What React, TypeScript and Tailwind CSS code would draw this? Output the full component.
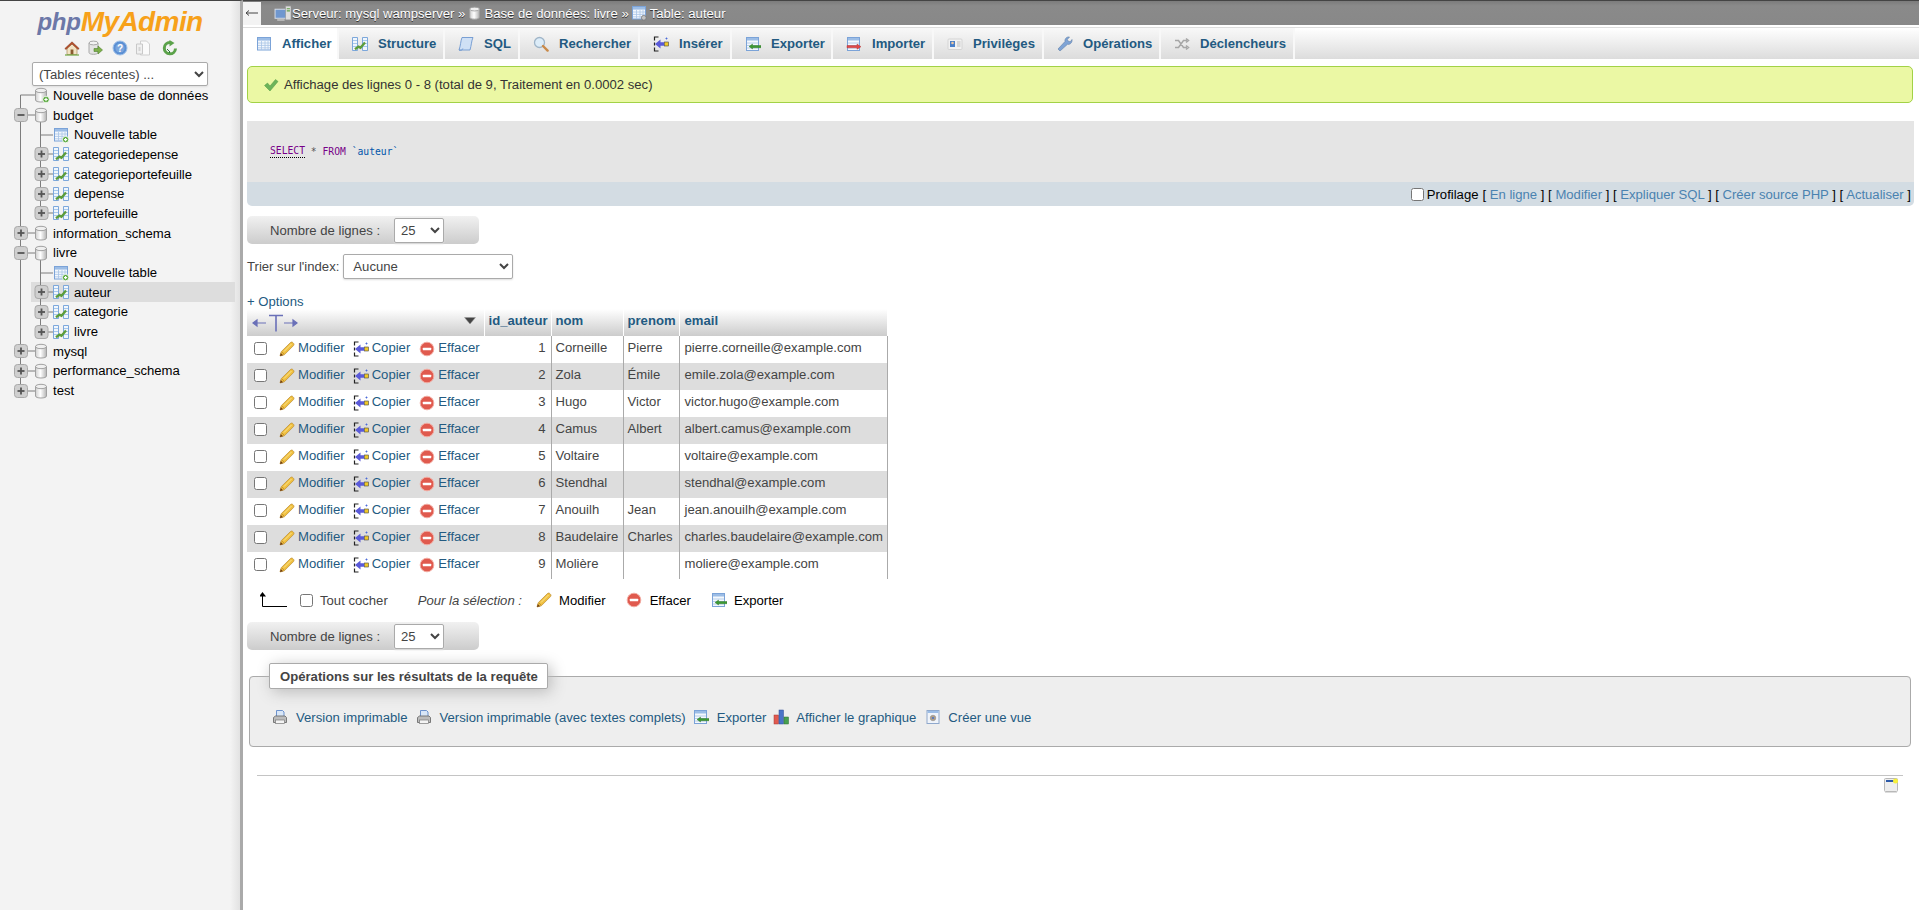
import React from "react";

const I = ({ s = 16, children, className = "" }: { s?: number; children: React.ReactNode; className?: string }) => (
  <svg width={s} height={s} viewBox="0 0 16 16" className={"shrink-0 " + className}>{children}</svg>
);

const Db = ({ plus = false, s = 16 }: { plus?: boolean; s?: number }) => (
  <I s={s}>
    <defs>
      <linearGradient id="dbg" x1="0" x2="1" y1="0" y2="0">
        <stop offset="0" stopColor="#cfcfcf" />
        <stop offset=".45" stopColor="#ffffff" />
        <stop offset="1" stopColor="#b4b4b4" />
      </linearGradient>
    </defs>
    <path d="M2 3.500v9.500c0 1.300 2.500 2 5.500 2s5.500-.7 5.500-2V3.500z" fill="url(#dbg)" stroke="#a0a0a0" />
    <ellipse cx="7.500" cy="3.500" rx="5.500" ry="2.200" fill="#efefef" stroke="#a0a0a0" />
    {plus && (
      <>
        <circle cx="12.500" cy="12.500" r="3.300" fill="#58a83c" stroke="#fff" strokeWidth=".8" />
        <path d="M10.800 12.500h3.400M12.500 10.800v3.400" stroke="#fff" strokeWidth="1.200" />
      </>
    )}
  </I>
);

const TableIc = ({ plus = false, gear = false }: { plus?: boolean; gear?: boolean }) => (
  <I>
    <rect x="1.500" y="1.500" width="13" height="12.500" fill="#f4f8fd" stroke="#7ba3d8" />
    <rect x="2" y="2" width="12" height="2.600" fill="#9cbde6" />
    <path d="M2 7h12M2 9.400h12M2 11.800h12M5.500 5v9M9 5v9M12 5v9" stroke="#a8c4e6" strokeWidth=".8" />
    {plus && (
      <>
        <circle cx="12.600" cy="12.600" r="3.200" fill="#58a83c" stroke="#fff" strokeWidth=".8" />
        <path d="M11 12.600h3.200M12.600 11v3.200" stroke="#fff" strokeWidth="1.100" />
      </>
    )}
    {gear && <circle cx="12.800" cy="12.800" r="2.400" fill="#c2c2c2" stroke="#777" strokeWidth=".8" />}
  </I>
);

const Props = () => (
  <I>
    <path d="M.5 1.500h5v13h-5zM10.500 1.500h5v13h-5z" fill="#f0f6fc" stroke="#6f9fd8" strokeWidth=".9" />
    <path d="M1 4.500h4M1 7.500h4M1 10.500h4M11 4.500h4M11 7.500h4M11 10.500h4" stroke="#a8c8ec" />
    <path d="M3 13.200l3.500-2.600 2 1.200L13 6.500" fill="none" stroke="#5c9c3a" strokeWidth="2.400" />
  </I>
);

const Expander = ({ minus = false }: { minus?: boolean }) => (
  <g>
    <rect x=".5" y=".5" width="13" height="13" rx="3" fill="#cfcfcf" stroke="#a9a9a9" />
    <path d="M3.500 7h7" stroke="#555" strokeWidth="1.800" />
    {!minus && <path d="M7 3.500v7" stroke="#555" strokeWidth="1.800" />}
  </g>
);

type Row = {
  t: string;
  lvl: number;
  kind: "newdb" | "db" | "newtable" | "table";
  minus?: boolean;
  down?: boolean;
  active?: boolean;
  last?: boolean;
};

const rows: Row[] = [
  { t: "Nouvelle base de données", lvl: 1, kind: "newdb" },
  { t: "budget", lvl: 1, kind: "db", minus: true, down: true },
  { t: "Nouvelle table", lvl: 2, kind: "newtable" },
  { t: "categoriedepense", lvl: 2, kind: "table" },
  { t: "categorieportefeuille", lvl: 2, kind: "table" },
  { t: "depense", lvl: 2, kind: "table" },
  { t: "portefeuille", lvl: 2, kind: "table", last: true },
  { t: "information_schema", lvl: 1, kind: "db" },
  { t: "livre", lvl: 1, kind: "db", minus: true, down: true },
  { t: "Nouvelle table", lvl: 2, kind: "newtable" },
  { t: "auteur", lvl: 2, kind: "table", active: true },
  { t: "categorie", lvl: 2, kind: "table" },
  { t: "livre", lvl: 2, kind: "table", last: true },
  { t: "mysql", lvl: 1, kind: "db" },
  { t: "performance_schema", lvl: 1, kind: "db" },
  { t: "test", lvl: 1, kind: "db" },
];

const TreeRow = ({ r, i }: { r: Row; i: number }) => {
  const first = i === 0;
  const lastAll = i === rows.length - 1;
  const lineColor = "#7d7d7d";
  return (
    <div className="relative flex h-[19.7px] items-center">
      {r.active && <div className="absolute left-[31px] right-[5px] top-0 bottom-0 bg-[#dddddd]" />}
      <svg width="53" height="20" viewBox="0 0 53 20" className="relative shrink-0">
        <path d={`M20.500 ${first ? 10 : 0}V${lastAll ? 10 : 20}`} stroke={lineColor} fill="none" />
        {r.lvl === 1 && <path d="M20.500 10H35" stroke={lineColor} />}
        {r.lvl === 1 && r.down && <path d="M40.500 16V20" stroke={lineColor} />}
        {r.lvl === 2 && (
          <path d={`M40.500 0V${r.last ? 10 : 20}M40.500 10H53`} stroke={lineColor} fill="none" />
        )}
        {r.kind === "db" && (
          <g transform="translate(14 3)">
            <Expander minus={r.minus} />
          </g>
        )}
        {r.kind === "table" && (
          <g transform="translate(34.500 3)">
            <Expander />
          </g>
        )}
        {r.lvl === 1 && (
          <g transform="translate(33.500 2)">
            <Db plus={r.kind === "newdb"} />
          </g>
        )}
      </svg>
      {r.lvl === 2 && (
        <span className="relative mr-[5px]">
          {r.kind === "newtable" ? <TableIc plus /> : <Props />}
        </span>
      )}
      <span className="relative whitespace-nowrap text-black">{r.t}</span>
    </div>
  );
};

const Home = () => (
  <I>
    <path d="M3 8v6.500h10V8L8 3.500z" fill="#f1e3c4" stroke="#a98a5a" strokeWidth=".7" />
    <path d="M.8 8.600L8 1.800l7.200 6.800-1.200.9L8 4 2 9.500z" fill="#b9502c" stroke="#7d3a1f" strokeWidth=".5" />
    <rect x="6.600" y="9.500" width="2.800" height="5" fill="#8a5a2e" />
    <path d="M1 15h14" stroke="#6ea53e" strokeWidth="1.200" />
  </I>
);
const DbGo = () => (
  <I>
    <path d="M2 3v9.500c0 1.200 2.200 1.800 4.500 1.800S11 13.700 11 12.500V3z" fill="#e4e4e4" stroke="#a8a8a8" />
    <ellipse cx="6.500" cy="3" rx="4.500" ry="1.900" fill="#f2f2f2" stroke="#a8a8a8" />
    <path d="M7 8.500h4V6l4.500 4-4.500 4v-2.500H7z" fill="#7eb04a" stroke="#4f7f2d" strokeWidth=".6" />
  </I>
);
const Help = () => (
  <I>
    <circle cx="8" cy="8" r="7" fill="#5a8fd4" stroke="#9fc0e8" />
    <circle cx="8" cy="8" r="4.600" fill="#fff" opacity=".2" />
    <text x="8" y="11.600" textAnchor="middle" fontSize="10" fontWeight="700" fontFamily="Liberation Sans" fill="#fff">?</text>
  </I>
);
const Docs = () => (
  <I>
    <path d="M5.500 1h6l3 3v11h-9z" fill="#fafafa" stroke="#cfcfcf" />
    <path d="M1.500 4h6v10h-6z" fill="#f0f0f0" stroke="#c8c8c8" />
    <path d="M3.500 7h2v4h-2z" fill="#d4d4d4" />
  </I>
);
const Reload = () => (
  <I>
    <path d="M13.500 8.500A5.600 5.600 0 1 1 8 2.600" fill="none" stroke="#5ba24a" strokeWidth="3" />
    <path d="M7.500 0l5 3-5 3.500z" fill="#5ba24a" />
    <path d="M5 9l3 3-1 1" fill="none" stroke="#2d7a38" strokeWidth="1" />
  </I>
);
const Sql = () => (
  <I>
    <path d="M4 1.500h11c-1.500 3-1.600 8-3 12.500H1C2.600 10 2.600 5 4 1.500z" fill="#cfe0f5" stroke="#6d96cf" strokeWidth=".9" />
    <path d="M1 14c1.800 1 3.500 0 3.800-1.500" fill="none" stroke="#6d96cf" strokeWidth=".9" />
  </I>
);
const Search = () => (
  <I>
    <circle cx="6.500" cy="6.500" r="5" fill="#dcecf8" stroke="#9fb5c8" strokeWidth="1.300" />
    <path d="M10 10l4.600 4.600" stroke="#c98a4a" strokeWidth="2.400" strokeLinecap="round" />
  </I>
);
const Insert = () => (
  <I>
    <path d="M5.500 1H1.500v3.500M1.500 11.500V15h4M1.500 6.500v3" stroke="#222" strokeWidth="1.200" fill="none" />
    <path d="M2 8l5.500-4.500v2.700h3.500v3.600H7.500v2.700z" fill="#5a5ad8" />
    <rect x="11.500" y="6" width="4" height="4" fill="#f0c828" stroke="#444" strokeWidth=".6" />
    <path d="M12.500 2.500h2M13.500 1.500v2" stroke="#4a6ad8" strokeWidth=".9" />
  </I>
);
const ExportIc = () => (
  <I>
    <rect x="1.500" y="1.500" width="12" height="13" fill="#f4f8fd" stroke="#7ba3d8" />
    <rect x="2" y="2" width="11" height="2.500" fill="#9cbde6" />
    <path d="M2 7h11M2 9.500h11M2 12h11" stroke="#a8c4e6" strokeWidth=".8" />
    <path d="M4 10.500L7.500 8v1.500H16v2.200H7.500V13z" fill="#3c9a32" stroke="#2a6f24" strokeWidth=".4" />
  </I>
);
const ImportIc = () => (
  <I>
    <rect x="1.500" y="1.500" width="12" height="13" fill="#f4f8fd" stroke="#7ba3d8" />
    <rect x="2" y="2" width="11" height="2.500" fill="#9cbde6" />
    <path d="M2 7h11M2 9.500h11M2 12h11" stroke="#a8c4e6" strokeWidth=".8" />
    <path d="M1 9.500h10V8l4 2.700-4 2.600v-1.500H1z" fill="#e04848" stroke="#a82c2c" strokeWidth=".4" />
  </I>
);
const Priv = () => (
  <I>
    <rect x="1" y="3" width="14" height="10.500" rx="1" fill="#f2f2f2" stroke="#d4d4d4" />
    <rect x="3" y="5" width="5" height="6" fill="#4a7fc8" />
    <circle cx="5.500" cy="7" r="1.300" fill="#f0c8a0" />
    <path d="M10 6h3.500M10 8h3.500M10 10h3.500" stroke="#bbb" />
  </I>
);
const Wrench = () => (
  <I>
    <path d="M3 15L1 13l7-7.500C7.500 3 9.500.5 12.500 1L10.300 3.500l1 1.800 2 .5L15 3.500c.5 3-2 5.500-4.500 4.800z" fill="#7fa4d6" stroke="#5f7fa8" strokeWidth=".6" />
  </I>
);
const Trig = () => (
  <I>
    <path d="M1 4.500h3.500l5 7H13M1 11.500h3.500l5-7H13M12 2.500l2.500 2-2.500 2M12 9.500l2.500 2-2.500 2" fill="none" stroke="#a6a6a6" strokeWidth="1.500" />
  </I>
);
const Check = () => (
  <I>
    <path d="M1.500 8.500L4.500 6l2.500 3L12.500 2.500 15 4.500 7 14z" fill="#6cb45a" stroke="#4f9a40" strokeWidth=".5" />
  </I>
);
const Pencil = () => (
  <I>
    <path d="M1 15l1.200-4.300L11.500 1.500c1-.8 2-.4 2.700.4.800.8 1.100 1.800.3 2.700L5.300 13.800z" fill="#f0c040" stroke="#b98a30" strokeWidth=".7" />
    <path d="M3 11l2 2" stroke="#c99530" />
    <path d="M1 15l.8-3 2.200 2.200z" fill="#6e3d14" />
    <path d="M5 10.500l7.500-7.500" stroke="#fbe490" />
  </I>
);
const Del = () => (
  <I>
    <circle cx="8" cy="8" r="6.800" fill="#e05a4e" stroke="#f2aaa0" />
    <rect x="3.800" y="6.800" width="8.400" height="2.400" rx=".5" fill="#fff" />
  </I>
);
const Print = () => (
  <I>
    <path d="M4.500 1.500h6l1.500 1.500v5H4.500z" fill="#d8e6f7" stroke="#5f88c8" strokeWidth=".9" />
    <path d="M1.500 8.500l2-1.500h9.500l1.500 1.500v5h-13z" fill="#bcbcbc" stroke="#6e6e6e" strokeWidth=".9" />
    <rect x="3.500" y="11" width="9" height="3.500" fill="#f4f4f4" stroke="#7a7a7a" strokeWidth=".7" />
  </I>
);
const Chart = () => (
  <I>
    <rect x="1" y="6" width="4.500" height="9" fill="#e05a50" stroke="#a83830" strokeWidth=".5" />
    <rect x="6" y="1" width="4.500" height="14" fill="#4a74c8" stroke="#2c4c98" strokeWidth=".5" />
    <rect x="11" y="8" width="4.500" height="7" fill="#48a050" stroke="#2c7034" strokeWidth=".5" />
  </I>
);
const View = () => (
  <I>
    <rect x="2" y="1.500" width="12" height="13" fill="#f0f4fa" stroke="#8fa8cc" />
    <rect x="2.500" y="2" width="11" height="2" fill="#9cbde6" />
    <circle cx="8" cy="9" r="2.800" fill="#b0a08a" stroke="#8a8a8a" strokeWidth=".5" />
    <circle cx="8" cy="9" r="1.100" fill="#4a74c8" />
  </I>
);
const ServerIc = () => (
  <I s={17}>
    <rect x="1" y="4" width="11" height="8.500" fill="#6f97cf" stroke="#d0d8e4" />
    <rect x="3" y="13" width="7" height="2" fill="#b8b8b8" />
    <rect x="11" y="1" width="5" height="13" fill="#dedede" stroke="#9a9a9a" strokeWidth=".6" />
    <path d="M12 3.500h3M12 5.500h3" stroke="#5fa048" />
  </I>
);

const tabs: { t: string; w: number; ic: React.ReactNode; active?: boolean }[] = [
  { t: "Afficher", w: 96, ic: <TableIc />, active: true },
  { t: "Structure", w: 106, ic: <Props /> },
  { t: "SQL", w: 75, ic: <Sql /> },
  { t: "Rechercher", w: 120, ic: <Search /> },
  { t: "Insérer", w: 92, ic: <Insert /> },
  { t: "Exporter", w: 101, ic: <ExportIc /> },
  { t: "Importer", w: 101, ic: <ImportIc /> },
  { t: "Privilèges", w: 110, ic: <Priv /> },
  { t: "Opérations", w: 117, ic: <Wrench /> },
  { t: "Déclencheurs", w: 134, ic: <Trig /> },
];

const data = [
  [1, "Corneille", "Pierre", "pierre.corneille@example.com"],
  [2, "Zola", "Émile", "emile.zola@example.com"],
  [3, "Hugo", "Victor", "victor.hugo@example.com"],
  [4, "Camus", "Albert", "albert.camus@example.com"],
  [5, "Voltaire", "", "voltaire@example.com"],
  [6, "Stendhal", "", "stendhal@example.com"],
  [7, "Anouilh", "Jean", "jean.anouilh@example.com"],
  [8, "Baudelaire", "Charles", "charles.baudelaire@example.com"],
  [9, "Molière", "", "moliere@example.com"],
];

const Nav = ({ className = "" }: { className?: string }) => (
  <div className={"flex h-[28px] w-[232px] items-center rounded-[5px] bg-[linear-gradient(#f1f1f1,#cccccc)] pl-[23px] " + className}>
    <span className="w-[124px]">Nombre de lignes :</span>
    <select className="h-[25px] w-[50px] rounded-[2px] border border-[#aaaaaa] bg-white pl-[2px] text-[#444] shadow-[0_1px_2px_#ddd]" defaultValue="25">
      <option>25</option>
    </select>
  </div>
);

const A = ({ children }: { children: React.ReactNode }) => <span className="text-[#235a81]">{children}</span>;
const L = ({ children }: { children: React.ReactNode }) => <span className="text-[#4a82b0]">{children}</span>;

export default function App() {
  return (
    <div className="flex min-h-screen w-full overflow-hidden bg-white font-['Liberation_Sans',Arial,sans-serif] text-[13.12px] leading-[15px] text-[#444]">
      <aside className="w-[243px] shrink-0 border-r-[3px] border-t border-[#aaaaaa] border-t-[#444] bg-[linear-gradient(to_right,#f3f3f3_96%,#e2e2e2)]">
        <div className="flex h-[36px] items-center justify-center pt-[5px] font-bold text-[#6c78a8] italic">
          <span className="text-[24px] leading-[30px] tracking-[-0.2px]">php</span>
          <span className="text-[28px] leading-[30px] tracking-[-0.6px] text-[#f7a11a]">MyAdmin</span>
        </div>
        <div className="flex h-[24px] items-center pb-[2px] pl-[64px]">
          <Home />
          <span className="ml-[7px]"><DbGo /></span>
          <span className="ml-[9px]"><Help /></span>
          <span className="ml-[7px]"><Docs /></span>
          <span className="ml-[11px]"><Reload /></span>
        </div>
        <div className="pl-[32px] pt-[1px]">
          <select className="h-[24px] w-[176px] rounded-[2px] border border-[#aaaaaa] bg-white pl-[2px] text-[#444] shadow-[0_1px_2px_#ddd]">
            <option>(Tables récentes) ...</option>
          </select>
        </div>
        <div className="-mt-[0.5px]">
          {rows.map((r, i) => <TreeRow key={i} r={r} i={i} />)}
        </div>
      </aside>

      <main className="min-w-0 flex-1">
        <div className="flex h-[25px] items-center border-t border-[#444] bg-[linear-gradient(#7c7c7c,#8a8a8a_20%,#888888)] text-white [text-shadow:0_1px_0_#333]">
          <span className="flex h-[23px] w-[18px] items-center justify-center bg-[#f3f3f3]">
            <svg width="14" height="8" viewBox="0 0 14 8"><path d="M1 4h12M1 4l3-2.500M1 4l3 2.500" stroke="#444" fill="none" /></svg>
          </span>
          <span className="ml-[13px] flex items-center"><ServerIc /><span className="ml-[1px]">Serveur: mysql wampserver »</span></span>
          <span className="ml-[3px] flex items-center"><Db s={14} /><span className="ml-[2px]">Base de données: livre »</span></span>
          <span className="ml-[2px] flex items-center"><TableIc gear /><span className="ml-[3px]">Table: auteur</span></span>
        </div>
        <div className="mt-[2px] flex h-[32px] border-t border-[#dddddd] bg-[linear-gradient(#ffffff,#dcdcdc)]">
          {tabs.map((t) => (
            <div
              key={t.t}
              style={{ width: t.w }}
              className={"flex shrink-0 items-center border-r-2 border-[#f8f8f8] pl-[13px] font-bold text-[#235a81] " + (t.active ? "bg-white" : "bg-[linear-gradient(#f8f8f8,#dcdcdc)]")}
            >
              {t.ic}
              <span className="ml-[10px]">{t.t}</span>
            </div>
          ))}
        </div>

        <div className="pl-[4px] pr-[5px]">
          <div className="mr-[1px] mt-[7px] flex h-[37px] items-center rounded-[5px] border border-[#a2d246] bg-[#ebf8a4] pl-[15px]">
            <Check />
            <span className="ml-[5px] text-[#333]">Affichage des lignes 0 - 8 (total de 9, Traitement en 0.0002 sec)</span>
          </div>

          <div className="mt-[18px] rounded-b-[5px] bg-[#d3dce3]">
            <div className="flex h-[61px] items-center bg-[#e5e5e5] pl-[23px] font-['DejaVu_Sans_Mono',monospace] text-[9.7px]">
              <span className="border-b border-dotted border-black leading-[12px] text-[#770088]">SELECT</span>
              <span className="text-[#555]">&nbsp;*&nbsp;</span>
              <span className="text-[#770088]">FROM</span>
              <span className="text-[#0055aa]">&nbsp;`auteur`</span>
            </div>
            <div className="flex h-[24px] items-center justify-end pr-[3px] text-black">
              <input type="checkbox" className="h-[13px] w-[13px]" />
              <span className="ml-[3px]">Profilage</span>
              <span className="ml-[4px]">[ <L>En ligne</L> ] [ <L>Modifier</L> ] [ <L>Expliquer SQL</L> ] [ <L>Créer source PHP</L> ] [ <L>Actualiser</L> ]</span>
            </div>
          </div>

          <Nav className="mt-[10px]" />

          <div className="mt-[10px] flex h-[25px] items-center">
            <span>Trier sur l'index:</span>
            <select className="ml-[4px] h-[25px] w-[170px] rounded-[2px] border border-[#aaaaaa] bg-white pl-[5px] text-[#444] shadow-[0_1px_2px_#ddd]">
              <option>Aucune</option>
            </select>
          </div>

          <div className="mt-[15px] text-[#235a81]">+ Options</div>

          <table className="w-[640px] table-fixed border-collapse">
            <colgroup>
              <col className="w-[237px]" />
              <col className="w-[67px]" />
              <col className="w-[72px]" />
              <col className="w-[56px]" />
              <col className="w-[208px]" />
            </colgroup>
            <thead>
              <tr className="h-[27px] bg-[linear-gradient(#ffffff,#cccccc)] font-bold text-[#235a81]">
                <th className="border-r border-white p-0 text-left align-middle">
                  <div className="flex items-center justify-between pl-[4px] pr-[8px]">
                    <svg width="48" height="20" viewBox="0 0 48 20" className="shrink-0">
                      <path d="M2 10h13M2 10l4-3v6zM33 10h13M46 10l-4-3v6z" stroke="#6a70b8" strokeWidth="1.200" fill="#6a70b8" />
                      <path d="M18 2.500h14M25 2.500V18.500" stroke="#6a70b8" strokeWidth="1.600" fill="none" />
                    </svg>
                    <svg width="12" height="8" viewBox="0 0 12 8" className="-mt-[4px]"><path d="M.5.500h11L6 7z" fill="#444" stroke="#999" strokeWidth=".5" /></svg>
                  </div>
                </th>
                <th className="border-r border-white p-0 pb-[5px] pl-[4px] text-left font-bold">id_auteur</th>
                <th className="border-r border-white p-0 pb-[5px] pl-[4px] text-left font-bold">nom</th>
                <th className="border-r border-white p-0 pb-[5px] pl-[4px] text-left font-bold">prenom</th>
                <th className="p-0 pb-[5px] pl-[5px] text-left font-bold">email</th>
              </tr>
            </thead>
            <tbody>
              {data.map((d, i) => (
                <tr key={i} className={"h-[27px] " + (i % 2 ? "bg-[#dddddd]" : "bg-white")}>
                  <td className="p-0 align-top">
                    <div className="flex pl-[7px]">
                      <input type="checkbox" className="mt-[6px] h-[13px] w-[13px]" />
                      <span className="ml-[12px] mt-[5px]"><Pencil /></span>
                      <span className="ml-[3px] mt-[3.5px]"><A>Modifier</A></span>
                      <span className="ml-[8px] mt-[5px]"><Insert /></span>
                      <span className="ml-[3px] mt-[3.5px]"><A>Copier</A></span>
                      <span className="ml-[9px] mt-[5px]"><Del /></span>
                      <span className="ml-[3px] mt-[3.5px]"><A>Effacer</A></span>
                    </div>
                  </td>
                  <td className="border-r border-[#aaaaaa] p-0 pr-[5px] pt-[3.5px] text-right align-top">{d[0]}</td>
                  <td className="border-r border-[#aaaaaa] p-0 pl-[4px] pt-[3.5px] align-top">{d[1]}</td>
                  <td className="border-r border-[#aaaaaa] p-0 pl-[4px] pt-[3.5px] align-top">{d[2]}</td>
                  <td className="border-r border-[#aaaaaa] p-0 pl-[5px] pt-[3.5px] align-top">{d[3]}</td>
                </tr>
              ))}
            </tbody>
          </table>

          <div className="mt-[9px] flex h-[24px] items-center pl-[13px]">
            <svg width="27" height="16" viewBox="0 0 27 16" className="shrink-0">
              <path d="M2.500 3v11.500H27" stroke="#000" fill="none" strokeWidth="1" />
              <path d="M2.500 0L6 4.500H-1z" fill="#000" />
            </svg>
            <input type="checkbox" className="ml-[13px] h-[13px] w-[13px]" />
            <span className="ml-[7px]">Tout cocher</span>
            <span className="ml-[30px] italic">Pour la sélection :</span>
            <span className="ml-[14px]"><Pencil /></span>
            <span className="ml-[7px] text-black">Modifier</span>
            <span className="ml-[20px]"><Del /></span>
            <span className="ml-[8px] text-black">Effacer</span>
            <span className="ml-[20px]"><ExportIc /></span>
            <span className="ml-[7px] text-black">Exporter</span>
          </div>

          <Nav className="mt-[10px]" />

          <fieldset className="ml-[2px] mr-[3px] mt-[13px] h-[84px] rounded-[4px] border border-[#aaaaaa] bg-[#eeeeee] px-[18px]">
            <legend className="ml-[1px] h-[26px] w-[279px] rounded-[2px] border border-[#aaaaaa] bg-white pl-[10px] leading-[25px] font-bold shadow-[3px_3px_15px_#bbbbbb]">
              Opérations sur les résultats de la requête
            </legend>
            <div className="mt-[18px] flex h-[20px] items-center text-[#235a81]">
              <span className="ml-[4px]"><Print /></span>
              <span className="ml-[8px]">Version imprimable</span>
              <span className="ml-[9px]"><Print /></span>
              <span className="ml-[7px]">Version imprimable (avec textes complets)</span>
              <span className="ml-[7px]"><ExportIc /></span>
              <span className="ml-[8px]">Exporter</span>
              <span className="ml-[7px]"><Chart /></span>
              <span className="ml-[7px]">Afficher le graphique</span>
              <span className="ml-[9px]"><View /></span>
              <span className="ml-[7px]">Créer une vue</span>
            </div>
          </fieldset>

          <div className="ml-[10px] mr-[11px] mt-[28px] border-t border-[#c4c4c4]" />
          <div className="flex justify-end pr-[16px] pt-[2px]">
            <svg width="14" height="15" viewBox="0 0 14 15">
              <rect x=".5" y=".5" width="13" height="13" rx="1" fill="#eeeeee" stroke="#b8b8b8" />
              <rect x="2" y="2" width="9" height="2" fill="#2d5aa8" />
              <circle cx="11.500" cy="3" r="2.500" fill="#f6f03c" />
              <path d="M1 14.500h12" stroke="#dddddd" />
            </svg>
          </div>
        </div>
      </main>
    </div>
  );
}
